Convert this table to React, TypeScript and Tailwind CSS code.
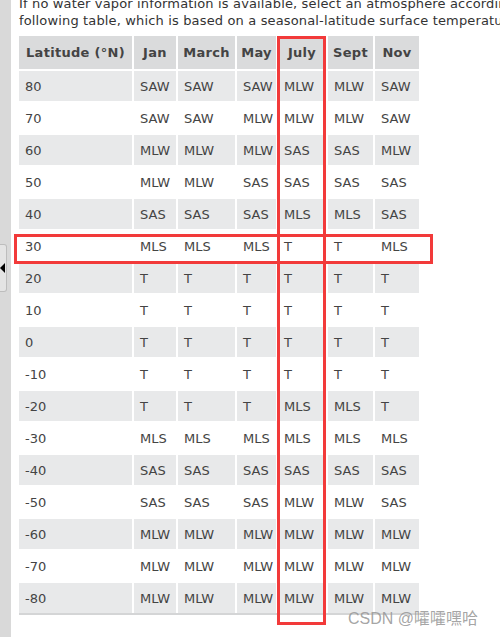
import React from "react";

const months = ["Jan", "March", "May", "July", "Sept", "Nov"];

const rows: [string, string[]][] = [
  ["80", ["SAW", "SAW", "SAW", "MLW", "MLW", "SAW"]],
  ["70", ["SAW", "SAW", "MLW", "MLW", "MLW", "SAW"]],
  ["60", ["MLW", "MLW", "MLW", "SAS", "SAS", "MLW"]],
  ["50", ["MLW", "MLW", "SAS", "SAS", "SAS", "SAS"]],
  ["40", ["SAS", "SAS", "SAS", "MLS", "MLS", "SAS"]],
  ["30", ["MLS", "MLS", "MLS", "T", "T", "MLS"]],
  ["20", ["T", "T", "T", "T", "T", "T"]],
  ["10", ["T", "T", "T", "T", "T", "T"]],
  ["0", ["T", "T", "T", "T", "T", "T"]],
  ["-10", ["T", "T", "T", "T", "T", "T"]],
  ["-20", ["T", "T", "T", "MLS", "MLS", "T"]],
  ["-30", ["MLS", "MLS", "MLS", "MLS", "MLS", "MLS"]],
  ["-40", ["SAS", "SAS", "SAS", "SAS", "SAS", "SAS"]],
  ["-50", ["SAS", "SAS", "SAS", "MLW", "MLW", "SAS"]],
  ["-60", ["MLW", "MLW", "MLW", "MLW", "MLW", "MLW"]],
  ["-70", ["MLW", "MLW", "MLW", "MLW", "MLW", "MLW"]],
  ["-80", ["MLW", "MLW", "MLW", "MLW", "MLW", "MLW"]],
];

export default function App() {
  return (
    <div className="relative flex h-[637px] w-[500px] overflow-hidden bg-white font-['DejaVu_Sans',Verdana,sans-serif] text-[13px] text-[#444]">
      {/* collapsed side panel */}
      <div className="w-[11px] shrink-0 bg-[#d9d9d9]" />
      <div className="absolute left-0 top-[244px] flex h-[48px] w-[7px] items-center rounded-r-[3px] border border-l-0 border-[#bdbdbd] bg-[#e4e4e4]">
        <div className="h-0 w-0 border-y-[5px] border-r-[5px] border-y-transparent border-r-black" />
      </div>

      <div className="min-w-0 flex-1 pl-[8px]">
        <p className="-mt-[5px] leading-[17px] tracking-[0.15px] text-[#333]">
          <span className="block whitespace-nowrap">
            If no water vapor information is available, select an atmosphere according to the
          </span>
          <span className="block whitespace-nowrap">
            following table, which is based on a seasonal-latitude surface temperature model.
          </span>
        </p>

        <div className="mt-[7px] grid w-max grid-cols-[113px_42px_57px_39px_48px_45px_44px] gap-[2px]">
          <div className="flex h-[33px] items-center justify-center bg-[#dadbdc] pt-[1px] font-bold tracking-[0.3px]">
            Latitude (°N)
          </div>
          {months.map((m) => (
            <div
              key={m}
              className="flex h-[33px] items-center justify-center bg-[#dadbdc] pt-[1px] font-bold tracking-[0.3px]"
            >
              {m}
            </div>
          ))}
          {rows.map(([lat, vals], i) => {
            const bg = i % 2 === 0 ? "bg-[#e8e9ea]" : "bg-white";
            return (
              <React.Fragment key={lat}>
                <div className={`flex h-[30px] items-center pl-[6px] pt-[1px] ${bg}`}>{lat}</div>
                {vals.map((v, j) => (
                  <div key={j} className={`flex h-[30px] items-center pl-[6px] pt-[1px] ${bg}`}>
                    {v}
                  </div>
                ))}
              </React.Fragment>
            );
          })}
        </div>
        <div className="h-[2px] w-[400px] bg-[#d4d5d6]" />
      </div>

      {/* highlight boxes */}
      <div className="absolute left-[277px] top-[36px] h-[589px] w-[49px] border-[3px] border-[#f23a3a]" />
      <div className="absolute left-[14px] top-[234px] h-[30px] w-[419px] border-[3px] border-[#f23a3a]" />

      <div className="absolute bottom-[9px] left-[348px] font-['Liberation_Sans','Noto_Sans_CJK_SC',sans-serif] text-[16px] leading-[18px] text-[#9a9a9a]/90">
        CSDN @嚯嚯嘿哈
      </div>
    </div>
  );
}
